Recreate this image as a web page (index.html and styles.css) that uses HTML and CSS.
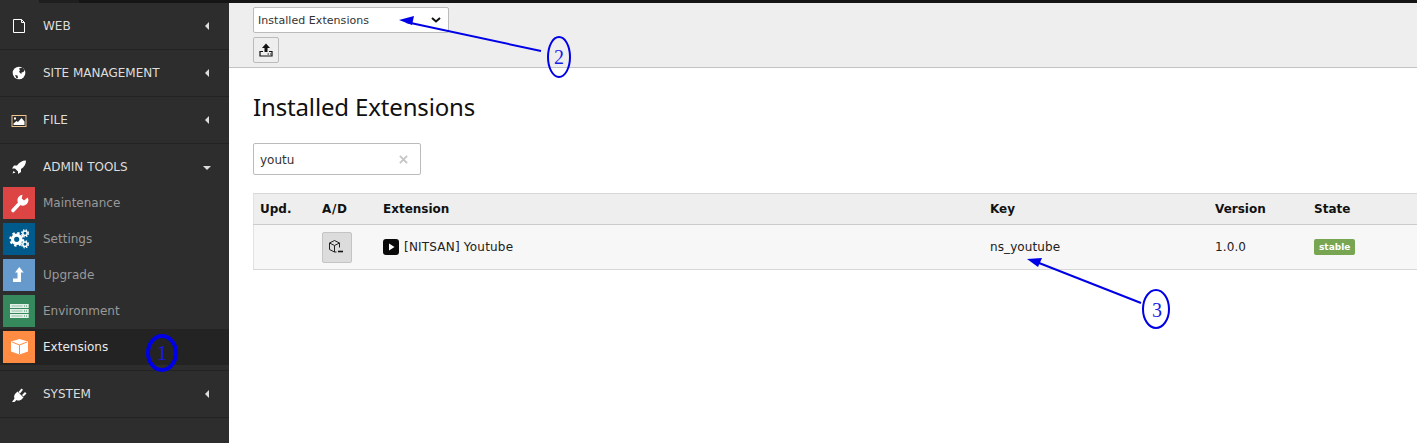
FILE: index.html
```html
<!DOCTYPE html>
<html>
  <head>
    <meta name="viewport" content="width=device-width, initial-scale=1.0">
    <title>Installed Extensions</title>
    <link rel="stylesheet" href="styles.css">
  </head>
  <body>
    <div class="topbar"></div>
    <div class="app">
      <nav class="sidebar">
        <div class="section">
          <svg class="section-icon" viewBox="0 0 16 16"><path d="M2.500 1.500h8l3 3v10h-11z M10.500 1.500v3h3" fill="none" stroke="#fff" stroke-width="1"/></svg>
          <span class="section-name">WEB</span>
          <span class="caret-left"></span>
        </div>
        <div class="section">
          <svg class="section-icon" viewBox="0 0 16 16"><circle cx="8" cy="8" r="6.300" fill="#fff"/><path d="M8 3.500l3.500-1 2 2.500-1 2-2 .5 0 1.500-1.500-1-1-1.500 1-1z M4 10l2.500 .5 .5 2.500-1.500 .5z" fill="#2d2d2d"/></svg>
          <span class="section-name">SITE MANAGEMENT</span>
          <span class="caret-left"></span>
        </div>
        <div class="section">
          <svg class="section-icon" viewBox="0 0 16 16"><rect x="1" y="3.500" width="14" height="11" fill="none" stroke="#efc48d"/><path d="M2.500 13v-1.500l3-2.500 1.500 1 3.500-4 3 3.500v3.500z M3 5.500h2v2h-2z" fill="#fff"/></svg>
          <span class="section-name">FILE</span>
          <span class="caret-left"></span>
        </div>
        <div class="section section-open">
          <svg class="section-icon" viewBox="0 0 16 16"><path d="M15 1.500c-4 0-7 2-9 5h-3l-2 3h3l3 3v2.500l3-2v-3c3-2 5-4.500 5-8.500z M2.500 12l-1 2.500 3-1z" fill="#fff"/></svg>
          <span class="section-name">ADMIN TOOLS</span>
          <span class="caret-down"></span>
        </div>
        <ul class="modules">
          <li class="module">
            <span class="tile tile-red"><svg viewBox="0 0 32 32"><path d="M10 23.500l6.500-7" fill="none" stroke="#fff" stroke-width="3.600" stroke-linecap="round"/><path d="M19.500 7.700l-.8 3.800 2.300 2 3.700-3a5.500 5.500 0 1 1-5.200-2.800z" fill="#fff"/></svg></span>
            Maintenance
          </li>
          <li class="module">
            <span class="tile tile-blue"><svg viewBox="0 0 32 32"><g fill="none" stroke="#fff"><circle cx="13.700" cy="16.300" r="4.200" stroke-width="3.200"/><circle cx="13.700" cy="16.300" r="6.400" stroke-width="2" stroke-dasharray="2.400 2.600"/><circle cx="22" cy="10.300" r="2.200" stroke-width="1.500"/><circle cx="22" cy="10.300" r="3.500" stroke-width="1.200" stroke-dasharray="1.400 1.400"/><circle cx="22" cy="21.300" r="2.200" stroke-width="1.500"/><circle cx="22" cy="21.300" r="3.500" stroke-width="1.200" stroke-dasharray="1.400 1.400"/></g></svg></span>
            Settings
          </li>
          <li class="module">
            <span class="tile tile-sky"><svg viewBox="0 0 32 32"><path d="M16.300 8l4.400 5.500h-2.700v9.500h-8v-3.500h4.500v-6h-2.500z" fill="#fff"/></svg></span>
            Upgrade
          </li>
          <li class="module">
            <span class="tile tile-green"><svg viewBox="0 0 32 32"><path d="M7 9h18.700v4h-18.700z M7 14h18.700v4h-18.700z M7 19h18.700v4h-18.700z" fill="#e3f0e8"/><path d="M8.500 11h11 M8.500 16h11 M8.500 21h11" stroke="#8fbfa3"/><path d="M21 11h1 M23 11h1 M21 16h1 M23 16h1 M21 21h1 M23 21h1" stroke="#35895c"/></svg></span>
            Environment
          </li>
          <li class="module module-active">
            <span class="tile tile-orange"><svg viewBox="0 0 32 32"><path d="M16.500 8l8.500 2.500v10l-8.500 3-8.500-3v-10z" fill="#fff"/><path d="M9 11l7.500 3 7.500-3 M16.500 14v9" fill="none" stroke="#ff8c42" stroke-width="1"/></svg></span>
            Extensions
          </li>
        </ul>
        <div class="section section-after">
          <svg class="section-icon" viewBox="0 0 16 16"><path d="M1 16l2.500-3.500c-1-2 0-4 1.500-5.500l1.500-1.500 6 6-1.500 1.500c-1.500 1.500-3.500 2-5.500 1l-3 3z M7.500 6l3-3.500 1.500 1.300-3 3.700z M11 9l3-3 1.500 1.500-3 3z" fill="#fff"/></svg>
          <span class="section-name">SYSTEM</span>
          <span class="caret-left"></span>
        </div>
      </nav>
      <main class="content">
        <div class="docheader">
          <div class="select-wrap">
            <select class="menu-select">
              <option>Installed Extensions</option>
            </select>
            <svg class="select-chevron" viewBox="0 0 10 6" width="10" height="6"><path d="M1 1l4 3.500 4-3.500" fill="none" stroke="#111" stroke-width="2"/></svg>
          </div>
          <button class="icon-btn">
            <svg viewBox="0 0 16 16" width="16" height="16"><path d="M8 1.500l4 4.500h-2.500v4h-3v-4h-2.500z" fill="#111"/><path d="M5 9.500h-3v4.500h12v-4.500h-3" fill="none" stroke="#111" stroke-width="1.200"/><path d="M9.500 12h1.500 M12 12h1" stroke="#111"/></svg>
          </button>
        </div>
        <div class="body">
          <h1>Installed Extensions</h1>
          <div class="search">
            <span>youtu</span>
            <svg viewBox="0 0 10 10" width="9" height="9"><path d="M1 1l8 8 M9 1l-8 8" stroke="#c4c4c4" stroke-width="2"/></svg>
          </div>
          <table class="ext-table">
            <thead>
              <tr>
                <th class="col-upd">Upd.</th>
                <th class="col-ad">A/D</th>
                <th class="col-ext">Extension</th>
                <th class="col-key">Key</th>
                <th class="col-ver">Version</th>
                <th>State</th>
              </tr>
            </thead>
            <tbody>
              <tr>
                <td class="cell-first"></td>
                <td>
                  <span class="toggle">
                    <svg viewBox="1 0 16 16" width="16" height="16"><path d="M11.500 8.500v-4.500l-5-2.500-5 2.500v6.500l5 2.500h2 M1.500 4l5 2.500 5-2.500 M6.500 6.500v6.500" fill="none" stroke="#222"/><path d="M10 12.500h5" stroke="#111" stroke-width="1.600"/></svg>
                  </span>
                </td>
                <td>
                  <span class="ext-name">
                    <svg viewBox="0 0 16 16" width="16" height="16"><rect width="16" height="16" rx="3" fill="#0a0a0a"/><path d="M6 4.500l5.500 3.500-5.500 3.500z" fill="#fff"/></svg>
                    [NITSAN] Youtube
                  </span>
                </td>
                <td>ns_youtube</td>
                <td>1.0.0</td>
                <td><span class="badge">stable</span></td>
              </tr>
            </tbody>
          </table>
        </div>
      </main>
    </div>

    <svg class="notes" width="1417" height="443" viewBox="0 0 1417 443">
      <ellipse cx="162" cy="353" rx="14" ry="17" fill="none" stroke="#0000e6" stroke-width="4"/>
      <text x="162" y="360" class="note-num">1</text>
      <path d="M541 51L406 22" fill="none" stroke="#0000e6" stroke-width="2"/>
      <path d="M399 20l15-4-2 9z" fill="#0000e6"/>
      <ellipse cx="559" cy="57" rx="11" ry="20" fill="none" stroke="#0000e6" stroke-width="2"/>
      <text x="559" y="64" class="note-num">2</text>
      <path d="M1141 303L1034 261" fill="none" stroke="#0000e6" stroke-width="2"/>
      <path d="M1027 259l15-1-4 9z" fill="#0000e6"/>
      <ellipse cx="1156" cy="309" rx="13" ry="19" fill="none" stroke="#0000e6" stroke-width="2"/>
      <text x="1157" y="317" class="note-num">3</text>
    </svg>
  </body>
</html>
```

FILE: styles.css
```css
* {
  box-sizing: border-box;
}
html, body {
  height: 100%;
}
body {
  margin: 0;
  padding: 0;
  font-family: "DejaVu Sans", sans-serif;
  font-size: 12px;
  color: #212121;
  background: #fff;
  overflow: hidden;
}
.topbar {
  height: 3px;
  background: linear-gradient(to right, #2d2d2d 39px, #1f1f1f 39px, #1f1f1f 79px, #151515 79px);
}
.app {
  display: flex;
  height: 440px;
}
.sidebar {
  width: 229px;
  flex-shrink: 0;
  background: #2d2d2d;
  color: #ddd;
}
.section {
  display: flex;
  align-items: center;
  height: 47px;
  padding: 0 20px 1px 11px;
  border-bottom: 1px solid #232323;
}
.section-open {
  border-bottom: none;
  height: 41px;
  padding-top: 15px;
  padding-bottom: 0;
  align-items: flex-start;
}
.section-icon {
  width: 16px;
  height: 16px;
  margin-right: 16px;
}
.section-name {
  flex: 1;
  line-height: 16px;
}
.caret-left {
  width: 0;
  height: 0;
  margin-top: 1px;
  border-top: 4px solid transparent;
  border-bottom: 4px solid transparent;
  border-right: 4px solid #ddd;
}
.caret-down {
  width: 0;
  height: 0;
  margin: 7px -2px 0 0;
  border-left: 4px solid transparent;
  border-right: 4px solid transparent;
  border-top: 4px solid #ddd;
}
.modules {
  list-style: none;
  margin: 0;
  padding: 0;
}
.module {
  display: flex;
  align-items: center;
  height: 36px;
  padding-left: 3px;
  color: #999;
}
.module-active {
  background: #232323;
  color: #e8e8e8;
}
.tile {
  display: block;
  width: 32px;
  height: 32px;
  margin-right: 8px;
}
.tile svg {
  display: block;
  width: 32px;
  height: 32px;
}
.tile-red {
  background: #dd4444;
}
.tile-blue {
  background: #005a8c;
}
.tile-sky {
  background: #6699cc;
}
.tile-green {
  background: #35895c;
}
.tile-orange {
  background: #ff8c42;
}
.section-after {
  height: 48px;
  margin-top: 5px;
  border-top: 1px solid #232323;
}
.content {
  flex: 1;
  min-width: 0;
}
.docheader {
  height: 65px;
  padding: 4px 24px 0;
  background: #eee;
  border-bottom: 1px solid #c3c3c3;
}
.select-wrap {
  position: relative;
  width: 196px;
}
.menu-select {
  display: block;
  width: 196px;
  height: 26px;
  padding: 0 0 0 4px;
  appearance: none;
  font-family: "DejaVu Sans", sans-serif;
  font-size: 11px;
  letter-spacing: .05px;
  color: #333;
  background: #fff;
  border: 1px solid #bbb;
  border-radius: 2px;
}
.select-chevron {
  position: absolute;
  top: 10px;
  right: 8px;
}
.icon-btn {
  display: flex;
  align-items: center;
  justify-content: center;
  width: 26px;
  height: 26px;
  margin-top: 4px;
  padding: 0;
  background: #eee;
  border: 1px solid #bbb;
  border-radius: 2px;
}
.body {
  padding: 24px 0 0 24px;
}
h1 {
  margin: 0 0 21px;
  font-family: "Noto Sans", sans-serif;
  font-size: 24px;
  font-weight: 400;
  letter-spacing: -.15px;
  line-height: 30px;
  color: #111;
}
.search {
  display: flex;
  justify-content: space-between;
  align-items: center;
  width: 168px;
  height: 32px;
  padding: 1px 12px 0 6px;
  margin-bottom: 18px;
  border: 1px solid #bbb;
  border-radius: 2px;
  color: #333;
}
.ext-table {
  width: 100%;
  border-collapse: collapse;
  table-layout: fixed;
}
.ext-table th {
  height: 31px;
  padding: 0 7px;
  text-align: left;
  font-size: 12px;
  font-weight: 700;
  color: #111;
  background: #eee;
  border-top: 1px solid #d7d7d7;
  border-bottom: 1px solid #ccc;
}
.ext-table td {
  height: 45px;
  padding: 0 7px;
  letter-spacing: .1px;
  background: #f7f7f7;
  border-bottom: 1px solid #d7d7d7;
}
.ext-table .cell-first,
.ext-table .col-upd {
  box-shadow: inset 1px 0 #e2e2e2;
}
.col-upd {
  width: 62px;
}
.ext-table .col-ad {
  width: 61px;
  letter-spacing: .7px;
}
.col-key {
  width: 225px;
}
.col-ver {
  width: 99px;
}
.col-ext {
  width: 607px;
}
.toggle {
  display: flex;
  align-items: center;
  justify-content: center;
  width: 30px;
  height: 31px;
  background: #dcdcdc;
  border: 1px solid #c4c4c4;
  border-radius: 2px;
}
.ext-name {
  display: flex;
  align-items: center;
  gap: 5px;
  letter-spacing: .2px;
}
.badge {
  display: inline-block;
  padding: 0 5px;
  font-size: 9px;
  font-weight: 700;
  letter-spacing: 0;
  line-height: 16px;
  color: #fff;
  background: #78a552;
  border-radius: 2px;
}
.notes {
  position: absolute;
  top: 0;
  left: 0;
  pointer-events: none;
}
.note-num {
  font-family: "Liberation Serif", serif;
  font-size: 20px;
  text-anchor: middle;
  fill: #1a1ae6;
}
```
